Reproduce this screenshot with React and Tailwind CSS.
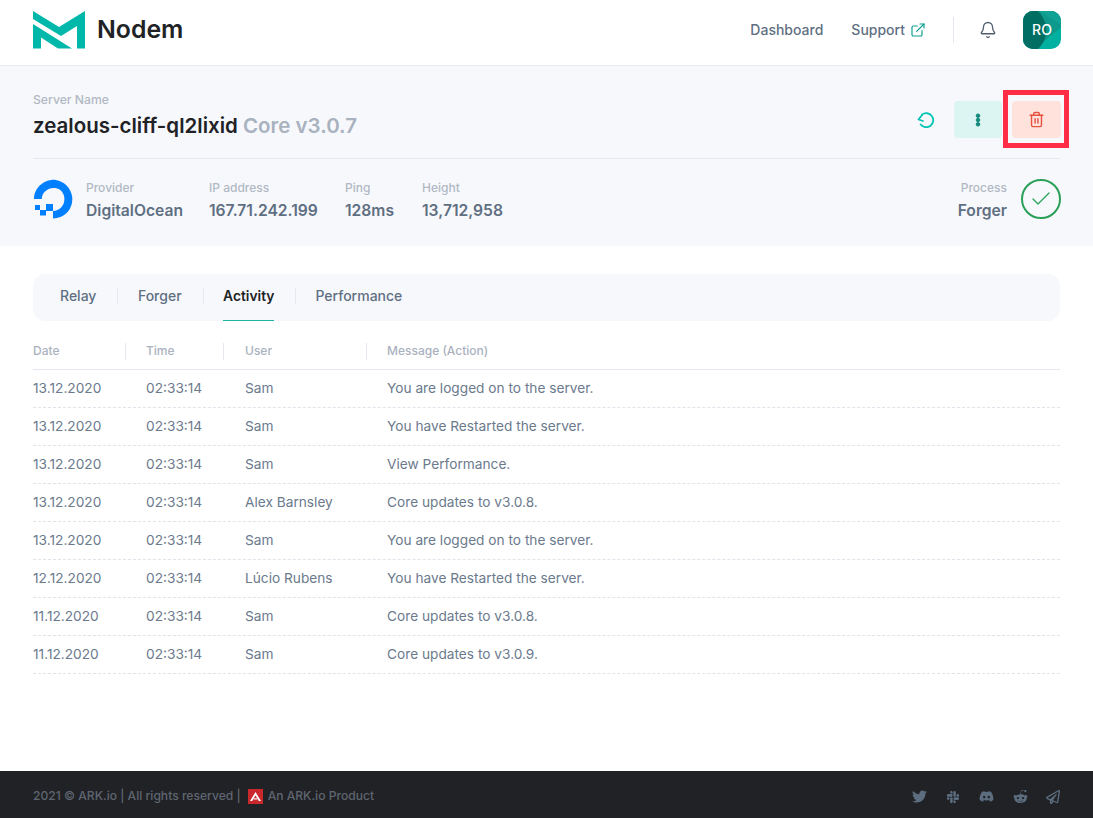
import React from "react";
import { ExternalLink, Bell, Trash2, Check } from "lucide-react";
import { FaTwitter, FaSlack, FaDiscord, FaRedditAlien, FaRegPaperPlane } from "react-icons/fa";

const rows = [
  ["13.12.2020", "Sam", "You are logged on to the server."],
  ["13.12.2020", "Sam", "You have Restarted the server."],
  ["13.12.2020", "Sam", "View Performance."],
  ["13.12.2020", "Alex Barnsley", "Core updates to v3.0.8."],
  ["13.12.2020", "Sam", "You are logged on to the server."],
  ["12.12.2020", "Lúcio Rubens", "You have Restarted the server."],
  ["11.12.2020", "Sam", "Core updates to v3.0.8."],
  ["11.12.2020", "Sam", "Core updates to v3.0.9."],
];

function Logo() {
  return (
    <svg width="52" height="38" viewBox="33 11 52 38" fill="#00b8a9">
      <polygon points="33,11 59,27 85,11 85,48.5 77,48.5 77,26 61,36 33,19" />
      <polygon points="33,24 72,48.5 58,48.5 41,37.5 41,48.5 33,48.5" />
    </svg>
  );
}

function DO() {
  return (
    <svg width="40" height="40" viewBox="0 0 40 40" fill="#0080ff">
      <path d="M20 39.500v-7.600c6.900 0 12.200-6.400 11.300-13.600-.6-4.800-4.100-8.600-8.900-9.300C15.200 8 8.800 13.200 8.800 20H1C1 8.900 11.100 0 22.800.9c8.400 1.300 15 8 16.300 16.300C40.900 29.700 31.800 39.500 20 39.500z" />
      <rect x="13" y="25" width="7" height="7" />
      <rect x="7" y="31" width="6" height="5.500" />
      <rect x="2" y="26" width="5" height="5" />
    </svg>
  );
}

function Stat({ label, value, className = "" }) {
  return (
    <div className={className}>
      <div className="text-xs font-medium leading-4 text-[#b1b8c4]">{label}</div>
      <div className="mt-[3px] text-[15.650px] font-semibold leading-6 text-[#5f6f82]">{value}</div>
    </div>
  );
}

const TabSep = () => <span className="ml-[21px] mr-[19.500px] h-4 w-px bg-[#e5e8ef]" />;

export default function App() {
  return (
    <div className="flex min-h-[818px] flex-col bg-white font-['Inter',sans-serif]">
      <header className="flex h-[66px] items-center border-b border-[#e8ebf2] pb-[6px] pl-[33px] pr-[32px]">
        <Logo />
        <span className="ml-3 text-[24.800px] font-semibold leading-none text-[#212225]">Nodem</span>
        <nav className="ml-auto flex items-center">
          <span className="text-sm font-medium text-[#5f6f82]">Dashboard</span>
          <span className="ml-7 text-sm font-medium text-[#5f6f82]">Support</span>
          <ExternalLink className="ml-[5px] text-[#0a9f91]" size={16} strokeWidth={1.75} />
          <span className="ml-[27px] h-[26px] w-px bg-[#e5e8ef]" />
          <Bell className="ml-[25px] text-[#4f5d6e]" size={18} strokeWidth={1.75} />
          <div className="relative ml-[26px] flex h-[38px] w-[38px] items-center justify-center overflow-hidden rounded-[10px] bg-[#00b0a0] text-sm font-medium text-white">
            <svg className="absolute inset-0" width="38" height="38" viewBox="0 0 38 38">
              <path d="M0 0h38v16C30 24 20 30 14 38H0z" fill="#0d9a8c" />
              <path d="M0 0h15c10 10 12 26 0 38H0z" fill="#006e62" />
              <path d="M15 0h23v14C30 8 24 4 15 0z" fill="#10a294" />
            </svg>
            <span className="relative">RO</span>
          </div>
        </nav>
      </header>

      <section className="h-[180px] bg-[#f7f8fc] px-[33px] pt-[26px]">
        <div className="flex h-[67px] items-start justify-between border-b border-[#e5e8ef]">
          <div>
            <div className="text-[12.200px] font-medium leading-4 text-[#b1b8c4]">Server Name</div>
            <div className="mt-[5px] text-[20.500px] font-semibold leading-[26px] text-[#212225]">
              zealous-cliff-ql2lixid <span className="text-[#a9b2bf]">Core v3.0.7</span>
            </div>
          </div>
          <div className="flex items-center">
            <svg className="mr-[19px] mt-[9px] text-[#00c4b4]" width="18" height="16" viewBox="0 0 18 16" fill="none" stroke="currentColor" strokeWidth="1.800" strokeLinecap="round" strokeLinejoin="round">
              <path d="M5 2.600A7 7 0 1 1 3.700 12.500" />
              <path d="M5.200 2.800L1.500 7.500L6 9" />
            </svg>
            <button className="mt-[9px] flex h-[37px] w-[48px] items-center justify-center rounded bg-[#dcf4f2]">
              <svg width="6" height="14" viewBox="0 0 6 14" fill="#0f8e80" stroke="#067d71" strokeWidth="0.800">
                <circle cx="3" cy="2.700" r="1.800" />
                <circle cx="3" cy="7" r="1.800" />
                <circle cx="3" cy="11.300" r="1.800" />
              </svg>
            </button>
            <button className="relative ml-[10px] mr-[-1px] mt-[9px] flex h-[37px] w-[49px] items-center justify-center rounded bg-[#ffe2dc]">
              <Trash2 className="text-[#e5533f]" size={17} strokeWidth={2} />
              <span className="absolute -bottom-[10px] -left-[9px] -right-[8px] -top-[11px] border-[5px] border-[#ff2d46]" />
            </button>
          </div>
        </div>
        <div className="flex items-start pt-[20px]">
          <DO />
          <Stat label="Provider" value="DigitalOcean" className="ml-[13px] mt-[1px] w-[123px]" />
          <Stat label="IP address" value="167.71.242.199" className="mt-[1px] w-[136px]" />
          <Stat label="Ping" value="128ms" className="mt-[1px] w-[77px]" />
          <Stat label="Height" value="13,712,958" className="mt-[1px]" />
          <div className="ml-auto mr-[-1px] flex items-start">
            <Stat label="Process" value="Forger" className="mt-[1px] text-right" />
            <div className="ml-[14px] flex h-[40px] w-[40px] items-center justify-center rounded-full border-2 border-[#2aa058]">
              <Check className="text-[#2aa058]" size={24} strokeWidth={1.25} />
            </div>
          </div>
        </div>
      </section>

      <main className="flex-1 px-[33px] pt-7">
        <div className="flex h-[47px] items-center rounded-xl bg-[#f7f8fc] pb-[3px] pl-[27px] text-sm font-medium text-[#5f6f82]">
          <span>Relay</span>
          <TabSep />
          <span>Forger</span>
          <TabSep />
          <span className="relative flex h-full items-center pt-[2px] text-[13.800px] font-semibold text-[#212225]">
            Activity
            <span className="absolute -bottom-[3px] left-0 right-0 h-[1.500px] bg-[#1bb3a6]" />
          </span>
          <span className="ml-[21px] mr-[19px] h-4 w-px bg-[#e5e8ef]" />
          <span>Performance</span>
        </div>

        <div className="mt-[12px] grid h-[37px] grid-cols-[113px_99px_142px_1fr] items-center border-b border-[#e5e8ef] text-xs font-medium text-[#aab2bf]">
          <div className="relative">Date<span className="absolute right-[20px] top-0 h-[17px] w-px bg-[#e5e8ef]" /></div>
          <div className="relative">Time<span className="absolute right-[21px] top-0 h-[17px] w-px bg-[#e5e8ef]" /></div>
          <div className="relative">User<span className="absolute right-[20px] top-0 h-[17px] w-px bg-[#e5e8ef]" /></div>
          <div>Message (Action)</div>
        </div>
        {rows.map((r, i) => (
          <div key={i} className="grid h-[38px] grid-cols-[113px_99px_142px_1fr] items-center border-b border-dashed border-[#dfe3ea] text-[13.700px] text-[#6b7a8d]">
            <div>{r[0]}</div>
            <div>02:33:14</div>
            <div>{r[1]}</div>
            <div>{r[2]}</div>
          </div>
        ))}
      </main>

      <footer className="flex h-[47px] items-center bg-[#212225] pl-[33px] pr-[33px] pt-[4px] text-[12.100px] font-medium text-[#5f6672]">
        <span>2021 © ARK.io | All rights reserved |</span>
        <span className="ml-[7px] flex h-[15px] w-[15px] items-center justify-center bg-[#c9292c]">
          <svg width="11" height="9" viewBox="0 0 11 9" fill="#fff">
            <path d="M5.500 0L11 9H8.800L5.500 3.500L2.200 9H0z" />
            <path d="M3.600 7.500h3.800L6.700 6.300H4.300z" />
          </svg>
        </span>
        <span className="ml-[5px]">An ARK.io Product</span>
        <div className="ml-auto flex items-center text-[#5c6d80]">
          <FaTwitter size={15} />
          <FaSlack className="ml-[19px]" size={14} />
          <FaDiscord className="ml-[19px]" size={15} />
          <FaRedditAlien className="ml-[19px]" size={15} />
          <FaRegPaperPlane className="ml-[18px]" size={14} />
        </div>
      </footer>
    </div>
  );
}
